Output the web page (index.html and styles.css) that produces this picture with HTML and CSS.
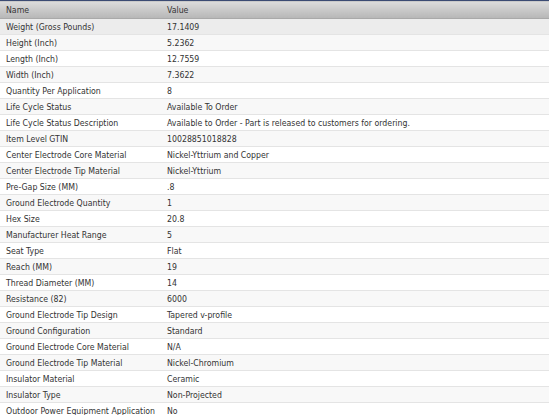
FILE: index.html
```html
<!DOCTYPE html>
<html>
<head>
<meta charset="utf-8">
<link rel="stylesheet" href="styles.css">
</head>
<body>
<table class="grid">
  <thead>
    <tr><th class="c-name">Name</th><th class="c-val">Value</th></tr>
  </thead>
  <tbody>
    <tr class="sel"><td>Weight (Gross Pounds)</td><td>17.1409</td></tr>
    <tr class="alt"><td>Height (Inch)</td><td>5.2362</td></tr>
    <tr><td>Length (Inch)</td><td>12.7559</td></tr>
    <tr class="alt"><td>Width (Inch)</td><td>7.3622</td></tr>
    <tr><td>Quantity Per Application</td><td>8</td></tr>
    <tr class="alt"><td>Life Cycle Status</td><td>Available To Order</td></tr>
    <tr><td>Life Cycle Status Description</td><td>Available to Order - Part is released to customers for ordering.</td></tr>
    <tr class="alt"><td>Item Level GTIN</td><td>10028851018828</td></tr>
    <tr><td>Center Electrode Core Material</td><td>Nickel-Yttrium and Copper</td></tr>
    <tr class="alt"><td>Center Electrode Tip Material</td><td>Nickel-Yttrium</td></tr>
    <tr><td>Pre-Gap Size (MM)</td><td>.8</td></tr>
    <tr class="alt"><td>Ground Electrode Quantity</td><td>1</td></tr>
    <tr><td>Hex Size</td><td>20.8</td></tr>
    <tr class="alt"><td>Manufacturer Heat Range</td><td>5</td></tr>
    <tr><td>Seat Type</td><td>Flat</td></tr>
    <tr class="alt"><td>Reach (MM)</td><td>19</td></tr>
    <tr><td>Thread Diameter (MM)</td><td>14</td></tr>
    <tr class="alt"><td>Resistance (82)</td><td>6000</td></tr>
    <tr><td>Ground Electrode Tip Design</td><td>Tapered v-profile</td></tr>
    <tr class="alt"><td>Ground Configuration</td><td>Standard</td></tr>
    <tr><td>Ground Electrode Core Material</td><td>N/A</td></tr>
    <tr class="alt"><td>Ground Electrode Tip Material</td><td>Nickel-Chromium</td></tr>
    <tr><td>Insulator Material</td><td>Ceramic</td></tr>
    <tr class="alt"><td>Insulator Type</td><td>Non-Projected</td></tr>
    <tr><td>Outdoor Power Equipment Application</td><td>No</td></tr>
  </tbody>
</table>
</body>
</html>
```
FILE: styles.css
```css
html, body {
  margin: 0;
  padding: 0;
  background: #ffffff;
  overflow: hidden;
}
.grid {
  width: 549px;
  border-collapse: collapse;
  table-layout: fixed;
  font-family: "DejaVu Sans Condensed", "DejaVu Sans", sans-serif;
  font-stretch: condensed;
  font-size: 8.7px;
  color: #333333;
}
.grid th {
  height: 17px;
  padding: 0 0 0 6px;
  text-align: left;
  font-weight: normal;
  color: #333333;
  border-top: 1px solid #3b4b73;
  border-bottom: 1px solid #a9a9a9;
  background: linear-gradient(#dcdcdc, #b6b6b6);
}
.grid .c-name { width: 155px; }
.grid td {
  height: 15px;
  padding: 0 0 0 6px;
  border-bottom: 1px solid #e4e4e4;
  white-space: nowrap;
  overflow: hidden;
  background: #ffffff;
}
.grid tr.alt td { background: #f8f8f8; }
.grid tr.sel td { background: #ececec; }
```
